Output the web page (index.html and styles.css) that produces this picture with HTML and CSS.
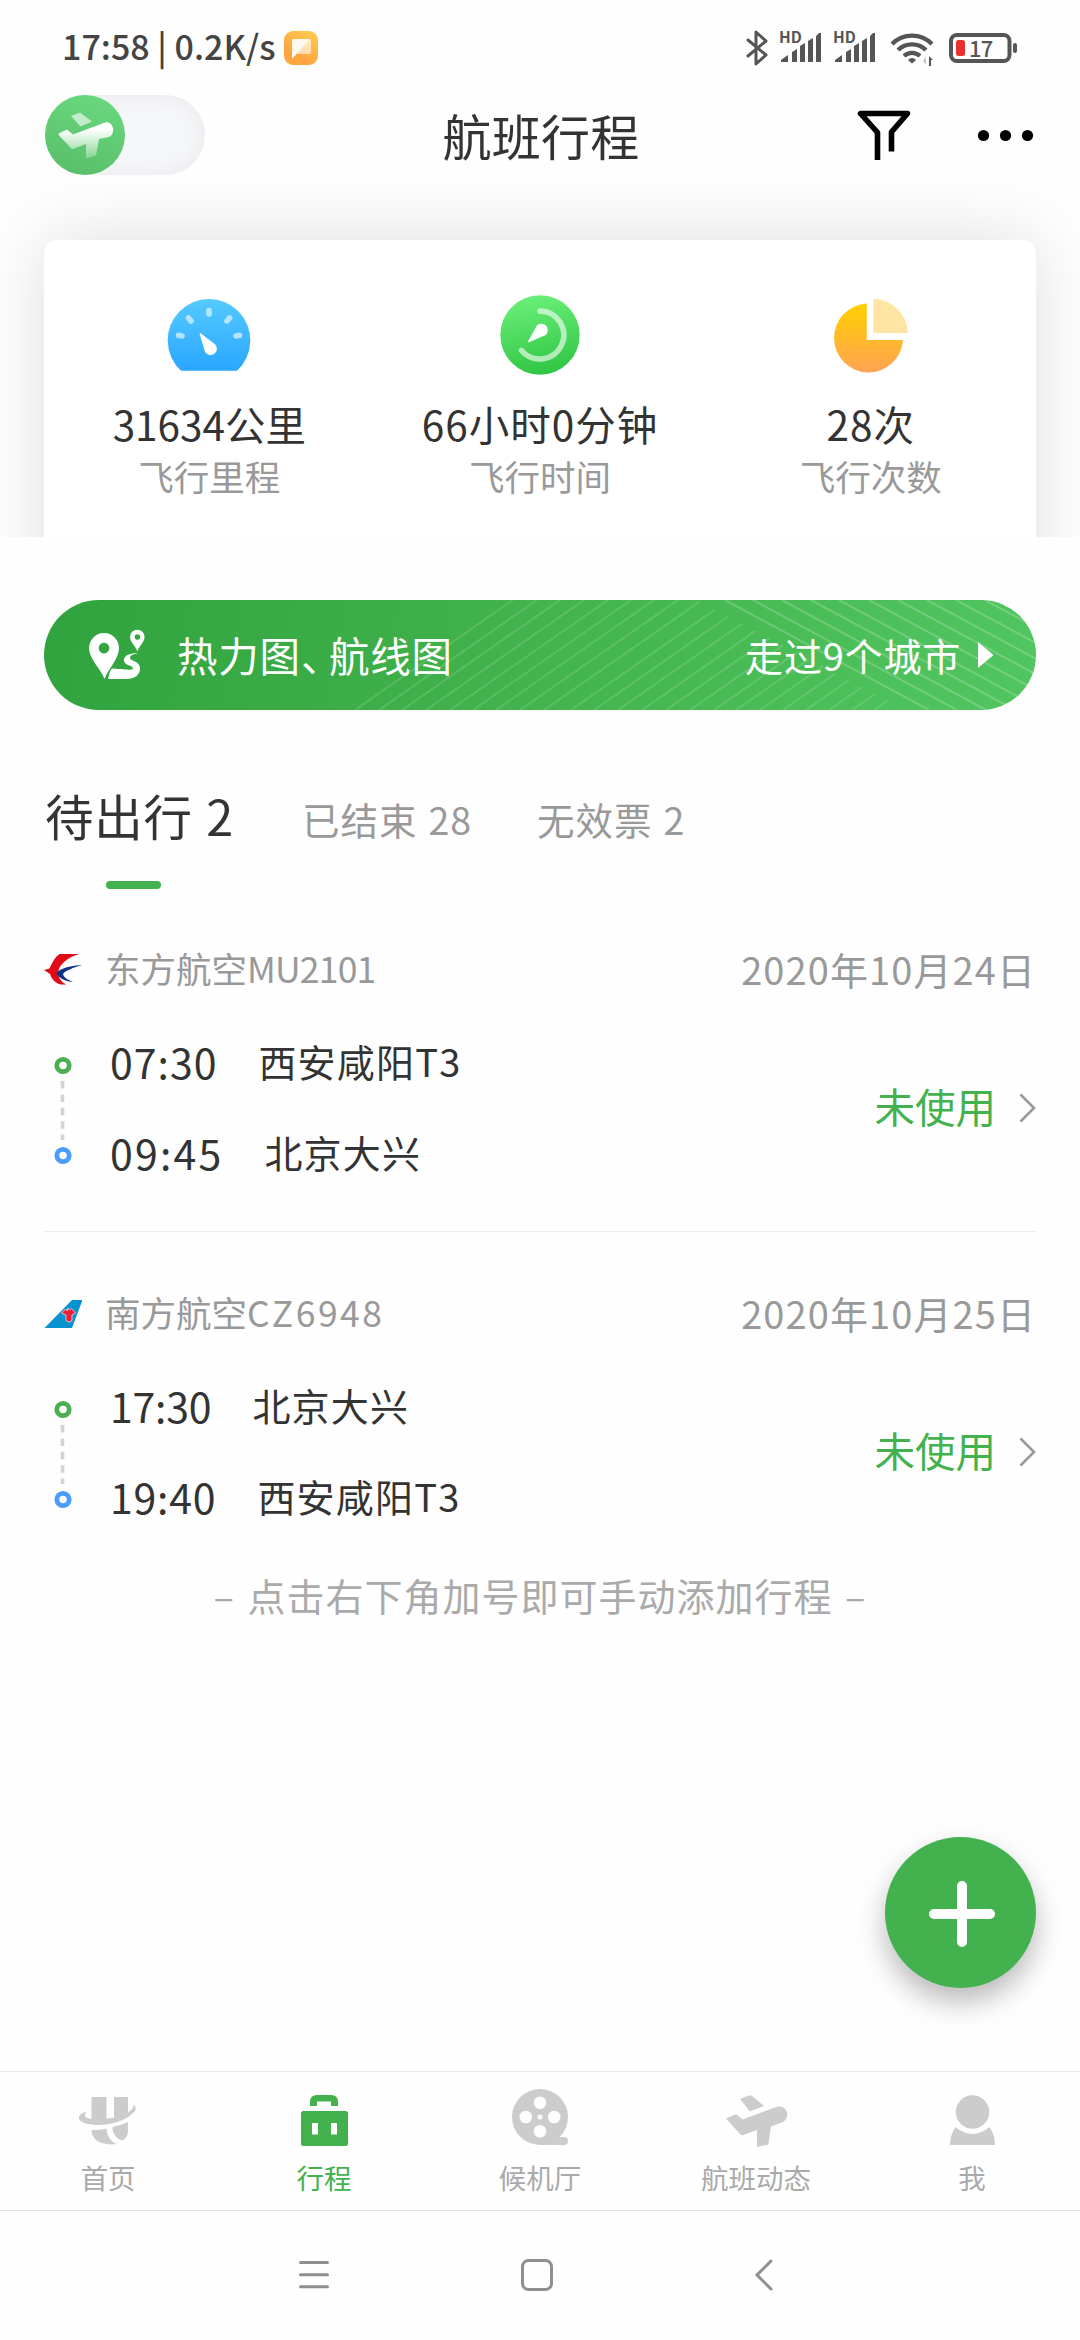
FILE: index.html
```html
<!DOCTYPE html>
<html lang="zh-CN">
<head>
<meta charset="utf-8">
<title>航班行程</title>
<link rel="stylesheet" href="styles.css">
</head>
<body>
<div class="page">
  <div class="status-bar">
    <span class="status-time">17:58 | 0.2K/s</span>
    <svg class="app-badge" width="34" height="34" viewBox="0 0 34 34">
      <defs><linearGradient id="badge" x1="1" y1="0" x2="0.5" y2="0.8"><stop offset="0" stop-color="#ffcf52"/><stop offset="1" stop-color="#ffa540"/></linearGradient></defs>
      <rect width="34" height="34" rx="9" fill="url(#badge)"/>
      <path d="M10 8h15a2 2 0 0 1 2 2v11a2 2 0 0 1-2 2H13z" fill="#fff" opacity=".6"/>
      <path d="M10 8h16L8 28V10a2 2 0 0 1 2-2z" fill="#fffaf0"/>
    </svg>
    <svg class="status-icons" width="274" height="58" viewBox="745 18 274 58">
      <g fill="none" stroke="#555" stroke-width="3" stroke-linejoin="round" stroke-linecap="round">
        <path d="M748 39l18 15-10 9V31l10 9-18 15"/>
      </g>
      <g fill="#555">
        <path id="bars" d="M781 61v-2l7-5v7zM792 61V51l5-3v13zM800 61V45l5-3v19zM808 61V40l5-3v24zM816 61V35l3-3h2v29z"/>
        <use href="#bars" x="54"/>
        <text class="hd" x="779" y="42">HD</text>
        <text class="hd" x="833" y="42">HD</text>
      </g>
      <g fill="none" stroke="#555" stroke-width="4.2">
        <path d="M892 43a28 28 0 0 1 40 0M898 49a20 20 0 0 1 28 0M904 55a12 12 0 0 1 16 0"/>
      </g>
      <path d="M908 59q4-4 8 0l-4 3.500z" fill="#555"/>
      <path d="M926 55v9l-3-4z" fill="#ccc"/><path d="M929 65v-10l4 4h-2v6z" fill="#555"/>
      <rect x="951" y="34" width="58.500" height="26" rx="6" fill="none" stroke="#555" stroke-width="4"/>
      <rect x="1013" y="42" width="4" height="10" rx="2" fill="#555"/>
      <rect x="956" y="39" width="9" height="16" rx="2.500" fill="#e83232"/>
      <text class="battery-level" x="969" y="56">17</text>
    </svg>
  </div>

  <header class="header">
    <div class="toggle">
      <svg width="80" height="80" viewBox="45 95 80 80">
        <defs>
          <linearGradient id="knob" x1=".7" y1="0" x2=".4" y2="1"><stop offset="0" stop-color="#69d87e"/><stop offset="1" stop-color="#5abf6a"/></linearGradient>
          <linearGradient id="body" x1="0" y1="0" x2="0" y2="1"><stop offset=".2" stop-color="#fff"/><stop offset="1" stop-color="#fff" stop-opacity=".25"/></linearGradient>
        </defs>
        <circle cx="85" cy="135" r="40" fill="url(#knob)"/>
        <path d="M71 116l9-3.500 12 9-11.500 5z" fill="#fff" opacity=".6"/>
        <path d="M58.500 133.500l8.500-4 6 5 32-12c9-2 11 12 4 14.500L99 139l-3 16.500-10 3V144l-13 5q-1 .4-2-1L59 135.500z" fill="url(#body)"/>
      </svg>
    </div>
    <h1 class="title">航班行程</h1>
    <svg class="header-icons" width="178" height="52" viewBox="856 109 178 52">
      <path d="M877.500 160V132.500L860.500 113.500h47L891.500 132V151.500" fill="none" stroke="#000" stroke-width="5.600" stroke-linejoin="round"/>
      <g fill="#000"><circle cx="983.500" cy="135.500" r="5.600"/><circle cx="1005.500" cy="135.500" r="5.600"/><circle cx="1027.500" cy="135.500" r="5.600"/></g>
    </svg>
  </header>

  <section class="stats-wrap">
    <div class="stats">
      <div class="stat">
        <svg width="84" height="80" viewBox="167 295 84 80">
          <defs><linearGradient id="blue" x1="0" y1="0" x2="0" y2="1"><stop offset="0" stop-color="#55caff"/><stop offset="1" stop-color="#2aa7ff"/></linearGradient></defs>
          <path d="M181 370.700a41.300 41.300 0 1 1 56 0z" fill="url(#blue)"/>
          <g stroke="#fff" stroke-opacity=".6" stroke-width="5.600" stroke-linecap="round">
            <path d="M209 310.500v3.500M188.500 318l2.500 3M229.500 318l-2.500 3M178.500 335.300l3.500.7M239.500 335.300l-3.500.7"/>
          </g>
          <path d="M199.500 333.500q1-.8 2 .5L214 343.500a6.300 6.300 0 1 1-9.500 7z" fill="#fff"/>
        </svg>
        <div class="stat-value">31634公里</div>
        <div class="stat-label">飞行里程</div>
      </div>
      <div class="stat">
        <svg width="80" height="80" viewBox="500 295 80 80">
          <defs><linearGradient id="green" x1=".4" y1="0" x2=".6" y2="1"><stop offset="0" stop-color="#6aef78"/><stop offset="1" stop-color="#2fc543"/></linearGradient></defs>
          <circle cx="540" cy="335" r="39.700" fill="url(#green)"/>
          <path d="M540 311a24 24 0 1 1-18.500 39.500" fill="none" stroke="#fff" stroke-opacity=".6" stroke-width="5.600" stroke-linecap="round"/>
          <path d="M528.500 342.500q-1-.8 0-2L535.500 328a6.300 6.300 0 1 1 6.500 8.500z" fill="#fff"/>
        </svg>
        <div class="stat-value stat-value-wide">66小时0分钟</div>
        <div class="stat-label">飞行时间</div>
      </div>
      <div class="stat">
        <svg width="80" height="80" viewBox="831 295 80 80">
          <defs><linearGradient id="orange" x1="0" y1="0" x2="0" y2="1"><stop offset="0" stop-color="#ffd000"/><stop offset="1" stop-color="#ffa354"/></linearGradient></defs>
          <path d="M866.800 303.500V340H903a34.500 34.500 0 1 1-36.200-36.500z" fill="url(#orange)"/>
          <path d="M873.300 298.500V333H908a36 36 0 0 0-34.700-34.500z" fill="#ffe5a3"/>
        </svg>
        <div class="stat-value stat-value-wide">28次</div>
        <div class="stat-label">飞行次数</div>
      </div>
    </div>
  </section>

  <a class="banner">
    <svg class="banner-lines" width="992" height="110" viewBox="44 600 992 110">
      <defs>
        <clipPath id="riseClip"><path d="M300 600H696L906 710H300z"/></clipPath>
      </defs>
      <g clip-path="url(#riseClip)" stroke="#fff" stroke-opacity=".14" stroke-width="2">
        <path d="M355 710l158-110M379 710l158-110M402 710l158-110M426 710l158-110M450 710l158-110M473 710l158-110M496 710l158-110M520 710l158-110M544 710l158-110M571 710l158-110M594 710l158-110M618 710l158-110M642 710l158-110M666 710l158-110M690 710l158-110M714 710l158-110M736 710l158-110M760 710l158-110M783 710l158-110M806 710l158-110M829 710l158-110M852 710l158-110M874 710l158-110"/>
      </g>
      <g stroke="#fff" stroke-opacity=".2" stroke-width="2">
        <path d="M725 600l204 110M753 600l204 110M782 600l204 110M811 600l204 110M839 600l204 110M869 600l204 110M898 600l204 110M927 600l204 110M956 600l204 110M985 600l204 110"/>
      </g>
    </svg>
    <svg class="banner-icon" width="58" height="54" viewBox="88 629 58 54">
      <g fill="#fff" fill-rule="evenodd">
        <path d="M104.500 680C101 670 89 660 89 649a15 15 0 0 1 30 0c0 11-11 21-14.500 31zM104 643.800a5.300 5.300 0 1 0 .01 0z"/>
        <path d="M137.400 652.500C135.500 647 130 643 130 638a7.300 7.300 0 0 1 14.600 0c0 5-5.500 9-7.200 14.500zM137.400 635.200a2.800 2.800 0 1 0 .01 0z"/>
        <path d="M138 654c-7 0-14 2-14 7 0 6 9 5 9 8.500 0 2-5 1-21 0-2 2-3 6-4 10.500h18c9 0 14-4 14-11 0-7-10-7-10-10 0-3 4-4 8-5z"/>
      </g>
    </svg>
    <span class="banner-title">热力图<span class="comma">、</span>航线图</span>
    <span class="banner-more">走过9个城市</span>
    <svg width="16" height="28" viewBox="0 0 16 28"><path d="M0 1l15.500 13L0 27z" fill="#fff"/></svg>
  </a>

  <nav class="tabs">
    <div class="tab tab-active">待出行 2</div>
    <div class="tab">已结束 28</div>
    <div class="tab">无效票 2</div>
  </nav>

  <main class="flights">
    <article class="flight">
      <div class="flight-head">
        <svg width="38" height="32" viewBox="44 953 38 32">
          <path d="M44 970l5.500-1.500c3-7 6-11.500 10-14.500H79.500c-9 2.500-17 7.500-20.500 14.500-2 7 1 13 7.500 16-9 .8-14-3-16.500-10.500z" fill="#e10b18"/>
          <path d="M82 965c-10 .5-22 3-25.500 8 2 5 9 8.500 16.500 9-6-2.500-9.500-5-10-8 3-4 10-6 19-9z" fill="#0b3488"/>
        </svg>
        <span class="flight-name">东方航空<span class="code-mu">MU2101</span></span>
        <time class="flight-date">2020年10月24日</time>
      </div>
      <div class="flight-body">
        <svg class="track" width="18" height="141" viewBox="0 0 18 141">
          <circle cx="9" cy="29.500" r="6.200" fill="#fff" stroke="#4aaf53" stroke-width="4.800"/>
          <path d="M8.500 45v59" stroke="#d3d3d3" stroke-width="3.600" stroke-dasharray="7.500 5.900"/>
          <circle cx="9" cy="119.500" r="6.200" fill="#fff" stroke="#4b9bfa" stroke-width="4.800"/>
        </svg>
        <div class="legs">
          <div class="leg"><span class="leg-time t-0730">07:30</span><span>西安咸阳T3</span></div>
          <div class="leg"><span class="leg-time t-0945">09:45</span><span>北京大兴</span></div>
        </div>
        <span class="flight-state">未使用</span>
        <svg class="chevron" width="17" height="30" viewBox="0 0 17 30"><path d="M1.500 1.500L15 15 1.500 28.500" fill="none" stroke="#999" stroke-width="2.600"/></svg>
      </div>
    </article>
    <article class="flight">
      <div class="flight-head">
        <svg width="38" height="32" viewBox="44 1297 38 32">
          <path d="M44.500 1328L72 1300h10.500l-10.500 28z" fill="#0792d0"/>
          <path d="M61.500 1313l4-4 1.500 2 1-3 1.500 2 2-1.500 4 4.500-3.500 2v5.500q-3 3-6 0v-5.500z" fill="#e8203a" stroke="#f3b5c5" stroke-width="1"/>
        </svg>
        <span class="flight-name">南方航空<span class="code-cz">CZ6948</span></span>
        <time class="flight-date">2020年10月25日</time>
      </div>
      <div class="flight-body">
        <svg class="track" width="18" height="141" viewBox="0 0 18 141">
          <circle cx="9" cy="29.500" r="6.200" fill="#fff" stroke="#4aaf53" stroke-width="4.800"/>
          <path d="M8.500 45v59" stroke="#d3d3d3" stroke-width="3.600" stroke-dasharray="7.500 5.900"/>
          <circle cx="9" cy="119.500" r="6.200" fill="#fff" stroke="#4b9bfa" stroke-width="4.800"/>
        </svg>
        <div class="legs">
          <div class="leg"><span class="leg-time t-1730">17:30</span><span>北京大兴</span></div>
          <div class="leg"><span class="leg-time t-1940">19:40</span><span>西安咸阳T3</span></div>
        </div>
        <span class="flight-state">未使用</span>
        <svg class="chevron" width="17" height="30" viewBox="0 0 17 30"><path d="M1.500 1.500L15 15 1.500 28.500" fill="none" stroke="#999" stroke-width="2.600"/></svg>
      </div>
    </article>
    <p class="hint">– 点击右下角加号即可手动添加行程 –</p>
  </main>

  <button class="fab" aria-label="添加">
    <svg width="151" height="151" viewBox="885 1837 151 151"><path d="M962 1886v56M934 1914h56" stroke="#fff" stroke-width="10" stroke-linecap="round"/></svg>
  </button>

  <nav class="tabbar">
    <div class="tabbar-item">
      <svg width="60" height="60" viewBox="78 2087 60 60" fill="#ccc">
        <path d="M91.500 2097h15v21.500l7.500-.8V2097h14v15.500c4-3 6.500-5.500 5-7.500 4 1.500 3.500 5-1 9-9 7.500-21 11-34 11-16 0-22.500-5.500-17.500-10.500 1.500-1.500 4-2.500 6.500-3-3 2.500-3 4.500 0 6.500l4.500 1z"/>
        <path d="M91.500 2130q8 .3 15-1.500c0 7 4 13 10 15.500-15 2-25-4-25-14zM112.500 2127q8-1.500 15.500-5v10q-.5 6.500-6.500 8.500c-5-2-9.500-7-9-13.500z"/>
      </svg>
      <span>首页</span>
    </div>
    <div class="tabbar-item tabbar-item-active">
      <svg width="60" height="60" viewBox="294 2087 60 60" fill="#43b14e">
        <path d="M310 2106v-4q0-7 7-7h14q7 0 7 7v4h-7v-4.500h-14v4.500z"/>
        <path fill-rule="evenodd" d="M303.500 2111h42q2.500 0 2.500 2.500v30q0 2.500-2.500 2.500h-42q-2.500 0-2.500-2.500v-30q0-2.500 2.500-2.500zM312 2123v11.500h6V2123zM331 2123v11.500h6V2123z"/>
      </svg>
      <span>行程</span>
    </div>
    <div class="tabbar-item">
      <svg width="60" height="60" viewBox="510 2087 60 60">
        <path d="M540 2137h24a4 4 0 0 1 0 8h-24z" fill="#ccc"/>
        <circle cx="540" cy="2117" r="28" fill="#ccc"/>
        <g fill="#fefefe"><circle cx="525.800" cy="2117" r="6.300"/><circle cx="554.200" cy="2117" r="6.300"/><circle cx="540" cy="2102.800" r="6.300"/><circle cx="540" cy="2131.200" r="6.300"/><circle cx="540" cy="2117" r="2.500"/></g>
      </svg>
      <span>候机厅</span>
    </div>
    <div class="tabbar-item">
      <svg width="64" height="60" viewBox="724 2087 64 60" fill="#ccc">
        <path d="M740 2099l9-3.500q1.500-.5 3 .5l12 10-14 5.500z"/>
        <path d="M726 2118.500l9-4q1.500-.4 3 1l4.500 4L776 2107c12-3 14.500 11 7 15l-12 4.500-2.500 17q-.3 1-1.500 1.500l-10 2V2130l-14 5q-1.500.8-2.500-.5z"/>
      </svg>
      <span>航班动态</span>
    </div>
    <div class="tabbar-item">
      <svg width="60" height="60" viewBox="942 2087 60 60" fill="#ccc">
        <circle cx="972.500" cy="2112" r="16.700"/>
        <path d="M955.500 2127q17 14 34 0 5.500 8 5.500 18h-45q0-10 5.500-18z"/>
      </svg>
      <span>我</span>
    </div>
  </nav>

  <div class="system-nav">
    <svg width="476" height="34" viewBox="298 2258 476 34" fill="none" stroke="#8f8f8f" stroke-width="3" stroke-linecap="round">
      <path d="M300.500 2262.500h27M300.500 2274.700h27M300.500 2286.700h27"/>
      <rect x="522.500" y="2260.500" width="29" height="29" rx="6"/>
      <path d="M771 2261l-14 14 14 14"/>
    </svg>
  </div>
</div>
</body>
</html>
```
FILE: styles.css
```css
* { box-sizing: border-box; }

body {
  margin: 0;
  background: #fefefe;
  color: #333;
  font-family: "Noto Sans CJK SC", sans-serif;
}

svg { display: block; flex: none; }

.page {
  position: relative;
  display: flex;
  flex-direction: column;
  width: 1080px;
  height: 2340px;
  overflow: hidden;
  white-space: nowrap;
}

.status-bar {
  display: flex;
  align-items: center;
  height: 95px;
  padding: 0 61px 0 62px;
  color: #444;
}
.status-time {
  width: 222px;
  padding-bottom: 4px;
  font-size: 34px;
  font-weight: 500;
  line-height: 46px;
}
.status-icons { margin-left: auto; }
.hd, .battery-level { fill: #555; font-family: "Noto Sans CJK SC", sans-serif; }
.hd { font-size: 15.500px; font-weight: 700; }
.battery-level { font-size: 22px; font-weight: 500; letter-spacing: -0.8px; }

.header {
  display: grid;
  grid-template-columns: 1fr auto 1fr;
  align-items: center;
  height: 80px;
  padding: 0 46px 0 45px;
}
.toggle {
  width: 160px;
  height: 80px;
  border-radius: 40px;
  background: #f6f7f9;
  box-shadow: inset 0 0 22px #e6e8ea;
}
.title {
  margin: 0 0 1px 3px;
  font-size: 49px;
  font-weight: 400;
  letter-spacing: 0.3px;
  line-height: 60px;
}
.header-icons { justify-self: end; }

.stats-wrap {
  height: 362px;
  padding: 65px 44px 0;
  overflow: hidden;
}
.stats {
  display: grid;
  grid-template-columns: repeat(3, 1fr);
  height: 400px;
  padding-top: 55px;
  border-radius: 14px;
  background: #fff;
  box-shadow: 0 0 72px rgba(0, 0, 0, 0.13);
}
.stat { display: flex; flex-direction: column; align-items: center; }
.stat-value { margin-top: 24px; font-size: 40.500px; line-height: 50px; }
.stat-value-wide { letter-spacing: 1px; }
.stat-label { margin-top: 2px; color: #999; font-size: 35.500px; line-height: 50px; }

.banner {
  position: relative;
  display: flex;
  align-items: center;
  height: 110px;
  margin: 63px 44px 0;
  padding: 0 42px 0 44px;
  overflow: hidden;
  border-radius: 55px;
  background: linear-gradient(100deg, #31a33e, #42b34d 50%, #51c660);
  color: #fff;
}
.banner-lines { position: absolute; inset: 0; }
.banner-icon { position: relative; margin-right: 31px; }
.banner-title { position: relative; padding-bottom: 2px; font-size: 40.500px; letter-spacing: 0.8px; }
.comma { margin-right: 7px; font-feature-settings: "halt"; }
.banner-more { position: relative; margin: 0 17px 2px auto; font-size: 38px; letter-spacing: 0.8px; }

.tabs {
  display: flex;
  height: 178px;
  padding: 75px 44px 0;
}
.tab {
  margin-right: 65px;
  padding-top: 4px;
  color: #999;
  font-size: 37.500px;
  letter-spacing: 1px;
  word-spacing: 1.500px;
  line-height: 60px;
}
.tab-active {
  width: 193px;
  padding: 0 0 0 1px;
  color: #333;
  font-size: 48.500px;
  letter-spacing: 0.7px;
  word-spacing: 2px;
}
.tab-active::after {
  content: "";
  display: block;
  width: 55px;
  height: 8px;
  margin: 36px 0 0 61px;
  border-radius: 4px;
  background: #43b14e;
}

.flight {
  height: 344px;
  margin: 0 44px;
  padding-top: 56px;
  border-bottom: 1px solid #eee;
}
.flight + .flight { height: 338px; border: 0; }
.flight-head { display: flex; align-items: center; height: 50px; color: #999; }
.flight-name { margin: 0 auto 3px 23px; font-size: 35.500px; line-height: 48px; }
.code-mu { letter-spacing: -0.8px; }
.code-cz { letter-spacing: 2.500px; }
.flight-date { font-size: 38px; letter-spacing: 1.100px; line-height: 50px; }

.flight-body {
  display: flex;
  align-items: center;
  height: 141px;
  margin-top: 42px;
}
.track { margin: 0 38px 0 10px; }
.legs { display: flex; flex-direction: column; gap: 41px; }
.leg { display: flex; align-items: center; gap: 41px; height: 50px; font-size: 38px; letter-spacing: 1.200px; line-height: 50px; }
.leg-time { font-size: 41px; }
.t-0730 { letter-spacing: 1px; }
.t-0945 { letter-spacing: 2.200px; }
.t-1730 { letter-spacing: -0.2px; }
.t-1940 { letter-spacing: 0.8px; }
.flight-state { margin: 0 23px 2px auto; color: #43b14e; font-size: 40.500px; }
.chevron { margin-top: 3px; }

.hint {
  margin: 0;
  color: #aaa;
  font-size: 38px;
  letter-spacing: 1px;
  word-spacing: 3px;
  line-height: 50px;
  text-align: center;
}

.fab {
  position: absolute;
  right: 44px;
  bottom: 352px;
  width: 151px;
  height: 151px;
  padding: 0;
  border: 0;
  border-radius: 50%;
  background: #43b14e;
  box-shadow: 0 14px 28px rgba(0, 0, 0, 0.27);
}

.tabbar {
  display: grid;
  grid-template-columns: repeat(5, 1fr);
  height: 139px;
  margin-top: auto;
  border-top: 1px solid #e8e8e8;
}
.tabbar-item {
  display: flex;
  flex-direction: column;
  align-items: center;
  gap: 10px;
  padding-top: 15px;
  color: #aaa;
  font-size: 27.500px;
  line-height: 40px;
}
.tabbar-item-active { color: #43b14e; }

.system-nav {
  display: flex;
  height: 130px;
  padding: 47px 0 0 298px;
  border-top: 1px solid #e0e0e0;
}
```
